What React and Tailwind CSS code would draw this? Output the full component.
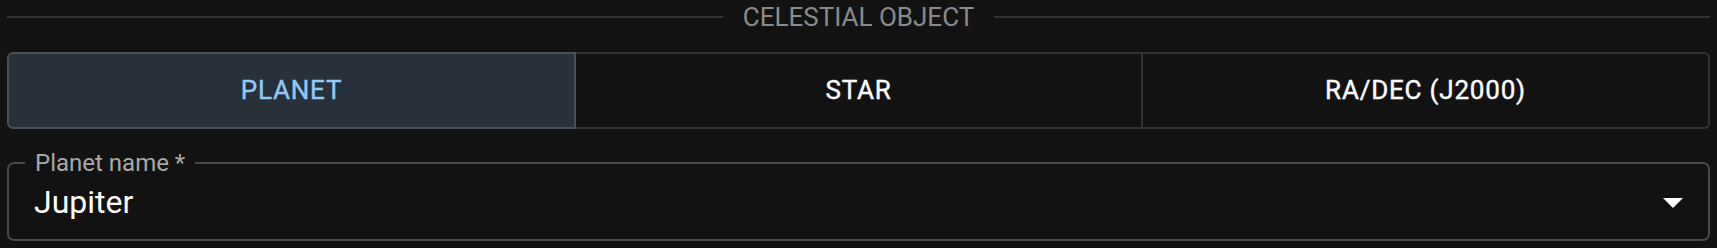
import React, { useState } from 'react';

const OPTIONS = ['PLANET', 'STAR', 'RA/DEC (J2000)'];

function ArrowDrop() {
    return (
        <svg width="48" height="48" viewBox="0 0 24 24" fill="#ffffff">
            <path d="M7 10l5 5 5-5z" />
        </svg>
    );
}

export default function App() {
    const [kind, setKind] = useState('PLANET');

    return (
        <div className="min-h-screen bg-[#121212] px-[7px] font-['Roboto',sans-serif]">
            {/* divider with title */}
            <div className="flex items-center h-[33px]">
                <div className="flex-1 h-[2px] bg-[#323232]" />
                <span className="px-[20px] text-[26px] leading-none text-[#8a8a8a]">CELESTIAL OBJECT</span>
                <div className="flex-1 h-[2px] bg-[#323232]" />
            </div>

            {/* toggle group */}
            <div className="mt-[19px] flex h-[77px]">
                {OPTIONS.map((opt, i) => {
                    const selected = kind === opt;
                    const first = i === 0;
                    const last = i === OPTIONS.length - 1;
                    return (
                        <button
                            key={opt}
                            onClick={() => setKind(opt)}
                            className={
                                'flex-1 flex items-center justify-center text-[26px] font-normal tracking-[0.8px] [-webkit-text-stroke:0.4px_currentColor] ' +
                                (first ? 'border-2 rounded-l-[6px] ' : 'border-y-2 border-r-2 ') +
                                (last ? 'rounded-r-[6px] ' : '') +
                                (selected
                                    ? 'bg-[#283039] text-[#90caf9] border-[#4a5058]'
                                    : 'bg-transparent text-white border-[#333333]')
                            }
                        >
                            {opt}
                        </button>
                    );
                })}
            </div>

            {/* select field */}
            <div className="relative mt-[33px] h-[79px] border-2 border-[#4a4a4a] rounded-[7px] flex items-center pl-[25px] pr-[11px]">
                <span className="absolute left-[16px] top-[-15px] px-[10px] bg-[#121212] text-[24px] leading-[28px] text-[#a9a9a9]">
                    Planet name *
                </span>
                <span className="flex-1 text-[32px] leading-none text-white">Jupiter</span>
                <ArrowDrop />
            </div>
        </div>
    );
}
